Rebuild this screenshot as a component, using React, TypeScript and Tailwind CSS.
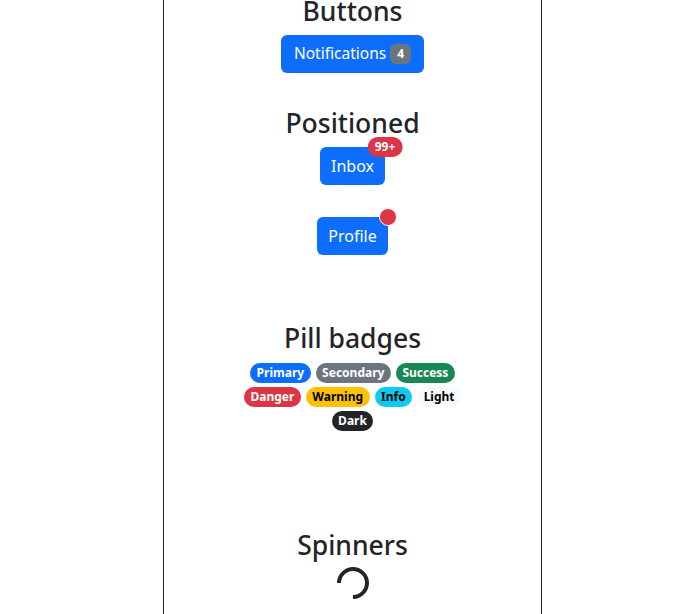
import React from 'react';

const pillRows: { label: string; cls: string }[][] = [
  [
    { label: 'Primary', cls: 'bg-[#0d6efd] text-white' },
    { label: 'Secondary', cls: 'bg-[#6c757d] text-white' },
    { label: 'Success', cls: 'bg-[#198754] text-white' },
  ],
  [
    { label: 'Danger', cls: 'bg-[#dc3545] text-white' },
    { label: 'Warning', cls: 'bg-[#ffc107] text-black' },
    { label: 'Info', cls: 'bg-[#0dcaf0] text-black' },
    { label: 'Light', cls: 'bg-[#f8f9fa] text-black' },
  ],
  [{ label: 'Dark', cls: 'bg-[#212529] text-white' }],
];

const Heading = ({ children, className = '' }: { children: React.ReactNode; className?: string }) => (
  <h2 className={`text-[26.5px] leading-[1.2] font-medium ${className}`}>{children}</h2>
);

const App: React.FC = () => {
  return (
    <div className="min-h-screen bg-white font-['Noto_Sans',sans-serif] text-[#212529]">
      <div className="ml-[163px] w-[379px] h-[614px] overflow-hidden border-x border-[#212529] text-center">
        {/* Buttons */}
        <section className="-mt-[4px]">
          <Heading className="mb-[7px]">Buttons</Heading>
          <button className="inline-flex h-[38px] w-[143px] items-center justify-center gap-[4px] rounded-[6px] bg-[#0d6efd] text-[15.5px] text-white">
            Notifications
            <span className="rounded-[6px] bg-[#6c757d] px-[7px] py-[4px] text-[12px] font-bold leading-[12px] text-white">
              4
            </span>
          </button>
        </section>

        {/* Positioned */}
        <section className="mt-[32px]">
          <Heading className="mb-[7px] pt-[3px]">Positioned</Heading>
          <div>
            <button className="relative inline-flex h-[38px] w-[65px] items-center justify-center rounded-[6px] bg-[#0d6efd] text-base text-white">
              Inbox
              <span className="absolute left-full top-0 -translate-x-1/2 -translate-y-1/2 rounded-full bg-[#dc3545] px-[7px] py-[4px] text-[12px] font-bold leading-[12px] text-white">
                99+
              </span>
            </button>
          </div>
          <div className="mt-[32px]">
            <button className="relative inline-flex h-[38px] w-[71px] items-center justify-center rounded-[6px] bg-[#0d6efd] text-base text-white">
              Profile
              <span className="absolute left-full top-0 h-[18px] w-[18px] -translate-x-1/2 -translate-y-1/2 rounded-full border border-[#f8f9fa] bg-[#dc3545]" />
            </button>
          </div>
        </section>

        {/* Pill badges */}
        <section className="mt-[65px]">
          <Heading className="mb-[6px] pt-[3px]">Pill badges</Heading>
          <div className="pt-[1px]">
            {pillRows.map((row, i) => (
              <div key={i} className="flex h-[24px] items-center justify-center gap-[5px]">
                {row.map((p) => (
                  <span
                    key={p.label}
                    className={`rounded-full px-[6.5px] py-[4px] text-[12px] font-bold leading-[12px] ${p.cls}`}
                  >
                    {p.label}
                  </span>
                ))}
              </div>
            ))}
          </div>
        </section>

        {/* Spinners */}
        <section className="mt-[93px]">
          <Heading className="mb-[5px] pt-[4px]">Spinners</Heading>
          <div className="inline-block h-8 w-8 rotate-[135deg] rounded-full border-4 border-[#212529] border-r-transparent" />
        </section>
      </div>
    </div>
  );
};

export default App;
